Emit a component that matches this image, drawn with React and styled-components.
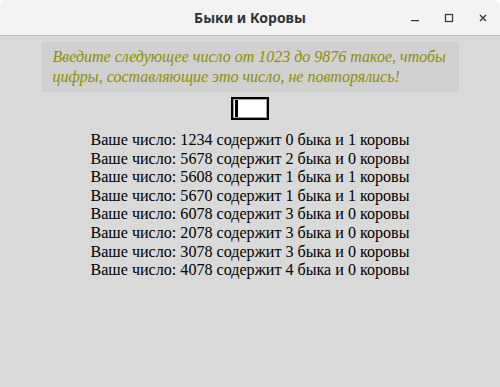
import React from "react";
import styled, { createGlobalStyle } from "styled-components";

const Global = createGlobalStyle`
  html, body { margin: 0; padding: 0; background: #ffffff; }
  #root { width: 500px; height: 387px; }
`;

const Window = styled.div`
  width: 500px;
  height: 387px;
  display: flex;
  flex-direction: column;
  border-radius: 8px 8px 0 0;
  overflow: hidden;
  background: #d9d9d9;
`;

const TitleBar = styled.div`
  height: 35px;
  flex: none;
  background: #f3f3f3;
  border-bottom: 1px solid #b9b9b9;
  position: relative;
  display: flex;
  align-items: center;
  justify-content: center;
`;

const Title = styled.span`
  font-family: "Noto Sans", "DejaVu Sans", sans-serif;
  font-weight: 700;
  font-size: 14px;
  color: #2e3436;
`;

const Controls = styled.div`
  position: absolute;
  right: 0;
  top: 0;
  height: 35px;
  display: flex;
  align-items: center;
`;

const CtrlButton = styled.div`
  width: 34px;
  height: 35px;
  display: flex;
  align-items: center;
  justify-content: center;
`;

const Content = styled.div`
  flex: 1;
  display: flex;
  flex-direction: column;
  align-items: center;
  padding-top: 6px;
`;

const Hint = styled.div`
  width: 417px;
  box-sizing: border-box;
  background: #d0d0d0;
  padding: 5px 11px;
  font-family: "Liberation Serif", serif;
  font-style: italic;
  font-size: 16px;
  line-height: 20px;
  color: #8e8e00;
`;

const Field = styled.div`
  margin-top: 5px;
  width: 38px;
  height: 23px;
  box-sizing: border-box;
  border: 2px solid #000;
  background: #fff;
  box-shadow: inset 0 0 0 1px #a0a0a0;
  display: flex;
  align-items: center;
  padding-left: 2px;
`;

const Caret = styled.div`
  width: 3px;
  height: 17px;
  background: #000;
`;

const Results = styled.div`
  margin-top: 11px;
  display: flex;
  flex-direction: column;
  align-items: center;
  font-family: "Liberation Serif", serif;
  font-size: 16.1px;
  line-height: 18.6px;
  color: #000;
`;

const Line = styled.div``;

const guesses = [
  ["1234", 0, 1],
  ["5678", 2, 0],
  ["5608", 1, 1],
  ["5670", 1, 1],
  ["6078", 3, 0],
  ["2078", 3, 0],
  ["3078", 3, 0],
  ["4078", 4, 0],
];

export default function App() {
  return (
    <>
      <Global />
      <Window>
        <TitleBar>
          <Title>Быки и Коровы</Title>
          <Controls>
            <CtrlButton>
              <svg width="10" height="10" viewBox="0 0 10 10">
                <rect x="1" y="7" width="8" height="1.2" fill="#2e3436" />
              </svg>
            </CtrlButton>
            <CtrlButton>
              <svg width="10" height="10" viewBox="0 0 10 10">
                <rect x="1.5" y="1.5" width="7" height="7" fill="none" stroke="#2e3436" strokeWidth="1.2" />
              </svg>
            </CtrlButton>
            <CtrlButton>
              <svg width="10" height="10" viewBox="0 0 10 10">
                <path d="M2 2 L8 8 M8 2 L2 8" stroke="#2e3436" strokeWidth="1.3" />
              </svg>
            </CtrlButton>
          </Controls>
        </TitleBar>
        <Content>
          <Hint>
            Введите следующее число от 1023 до 9876 такое, чтобы цифры, составляющие это число, не повторялись!
          </Hint>
          <Field>
            <Caret />
          </Field>
          <Results>
            {guesses.map(([n, b, c]) => (
              <Line key={n}>
                Ваше число: {n} содержит {b} быка и {c} коровы
              </Line>
            ))}
          </Results>
        </Content>
      </Window>
    </>
  );
}
